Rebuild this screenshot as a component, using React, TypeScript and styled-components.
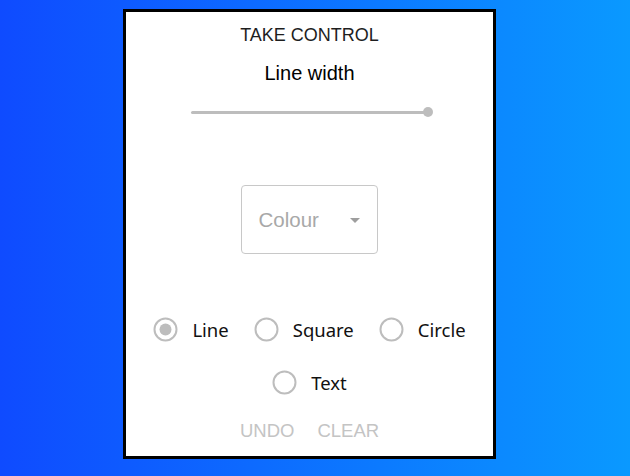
import React, { FC } from "react";
import styled, { createGlobalStyle } from "styled-components";

const GlobalStyle = createGlobalStyle`
  html, body {
    margin: 0;
    padding: 0;
  }
  body {
    width: 630px;
    height: 476px;
    overflow: hidden;
    background: linear-gradient(to right, #0f4bff, #0a99ff);
    font-family: "Liberation Sans", Arial, sans-serif;
  }
`;

const Page = styled.div`
  display: flex;
  align-items: flex-start;
  padding: 9px 0 0 123px;
`;

const Panel = styled.section`
  box-sizing: border-box;
  width: 373px;
  height: 450px;
  border: 3px solid #000;
  background: #fff;
  display: flex;
  flex-direction: column;
  align-items: center;
  padding-top: 12px;
`;

const Title = styled.div`
  font-size: 18px;
  line-height: 22px;
  color: #1e1e1e;
`;

const Label = styled.div`
  margin-top: 15px;
  font-size: 20px;
  line-height: 24px;
  color: #000;
`;

const SliderWrap = styled.div`
  margin-top: 17px;
  width: 237px;
  height: 20px;
  display: flex;
  align-items: center;
  position: relative;
`;

const Track = styled.div`
  flex: 1;
  height: 3px;
  border-radius: 2px;
  background: #bdbdbd;
`;

const Thumb = styled.div`
  position: absolute;
  right: -5px;
  top: 5px;
  width: 10px;
  height: 10px;
  border-radius: 50%;
  background: #bdbdbd;
`;

const Select = styled.div`
  box-sizing: border-box;
  margin-top: 63px;
  margin-right: 1px;
  width: 137px;
  height: 69px;
  border: 1px solid #c8c8c8;
  border-radius: 4px;
  display: flex;
  align-items: center;
  justify-content: space-between;
  padding: 0 17px 0 17px;
  color: #a8a8a8;
  font-size: 20.5px;
`;

const Arrow = styled.span`
  width: 0;
  height: 0;
  border-left: 5px solid transparent;
  border-right: 5px solid transparent;
  border-top: 5px solid #9e9e9e;
  margin-top: 2px;
`;

const RadioRow = styled.div<{ gapTop: number }>`
  margin-top: ${p => p.gapTop}px;
  height: 42px;
  display: flex;
  align-items: center;
  gap: 25px;
`;

const Option = styled.label`
  display: flex;
  align-items: center;
  gap: 14px;
  font-family: "Noto Sans", "Open Sans", sans-serif;
  font-size: 18.5px;
  color: #111;
`;

const Buttons = styled.div`
  margin-top: 10px;
  height: 36px;
  display: flex;
  align-items: center;
  gap: 23px;
`;

const TextButton = styled.button`
  border: none;
  background: none;
  padding: 0;
  font-family: "Liberation Sans", Arial, sans-serif;
  font-size: 18.5px;
  color: #c4c4c4;
`;

const RadioIcon: FC<{ checked?: boolean }> = ({ checked }) => (
  <svg width="25" height="25" viewBox="0 0 25 25">
    <circle cx="12.5" cy="12.5" r="11" fill="none" stroke="#bdbdbd" strokeWidth="2" />
    {checked && <circle cx="12.5" cy="12.5" r="6" fill="#bdbdbd" />}
  </svg>
);

const RadioOption: FC<{ label: string; checked?: boolean }> = ({ label, checked }) => (
  <Option>
    <RadioIcon checked={checked} />
    {label}
  </Option>
);

const App: FC = () => (
  <>
    <GlobalStyle />
    <Page>
      <Panel>
        <Title>TAKE CONTROL</Title>
        <Label>Line width</Label>
        <SliderWrap>
          <Track />
          <Thumb />
        </SliderWrap>
        <Select>
          Colour
          <Arrow />
        </Select>
        <RadioRow gapTop={54}>
          <RadioOption label="Line" checked />
          <RadioOption label="Square" />
          <RadioOption label="Circle" />
        </RadioRow>
        <RadioRow gapTop={11}>
          <RadioOption label="Text" />
        </RadioRow>
        <Buttons>
          <TextButton>UNDO</TextButton>
          <TextButton>CLEAR</TextButton>
        </Buttons>
      </Panel>
    </Page>
  </>
);

export default App;
